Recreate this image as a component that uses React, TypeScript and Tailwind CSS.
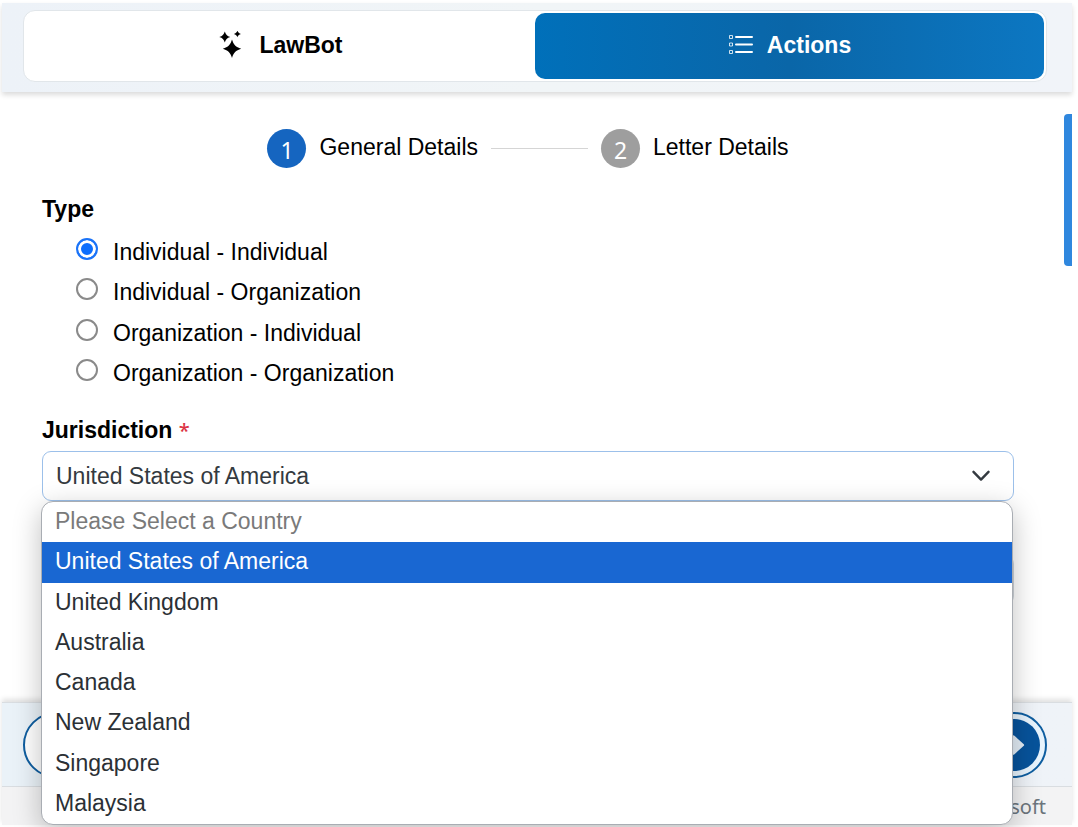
import React, { useState } from "react";

const COUNTRIES = [
  "United States of America",
  "United Kingdom",
  "Australia",
  "Canada",
  "New Zealand",
  "Singapore",
  "Malaysia",
];

const PARTY_TYPES = [
  "Individual - Individual",
  "Individual - Organization",
  "Organization - Individual",
  "Organization - Organization",
];

const SparkIcon = () => (
  <svg width="24" height="28" viewBox="0 0 24 28" fill="currentColor" aria-hidden="true">
    <path d="M14 8.500c1.700 5.400 3.600 7.400 9.200 9.200c-5.600 1.800-7.500 3.800-9.200 9.200c-1.700-5.400-3.600-7.400-9.200-9.200c5.600-1.800 7.500-3.800 9.200-9.200z" />
    <path d="M6.800.4c1 3.200 2.200 4.500 5.500 5.500c-3.300 1-4.500 2.300-5.500 5.500c-1-3.200-2.200-4.500-5.500-5.500c3.300-1 4.500-2.300 5.500-5.500z" />
    <path d="M19.400-.4c.6 1.900 1.500 2.700 3.600 3.300c-2.100.6-3 1.400-3.600 3.300c-.6-1.900-1.500-2.700-3.600-3.300c2.100-.6 3-1.400 3.600-3.300z" />
  </svg>
);

const ListIcon = () => (
  <svg width="25" height="20" viewBox="0 0 25 20" fill="none" stroke="currentColor" aria-hidden="true">
    <path d="M8 2H24M8 9.500H24M8 17H24" strokeWidth="2" strokeLinecap="round" />
    <path d="M1.500.5h3v3h-3zM1.500 8h3v3h-3zM1.500 15.500h3v3h-3z" strokeWidth="1" strokeOpacity="0.8" />
  </svg>
);

const ChevronIcon = () => (
  <svg
    className="pointer-events-none absolute right-6 top-1/2 -translate-y-1/2"
    width="18"
    height="12"
    viewBox="0 0 18 12"
    fill="none"
    stroke="#343a40"
    strokeWidth="2.400"
    strokeLinecap="round"
    strokeLinejoin="round"
    aria-hidden="true"
  >
    <path d="M1.500 1.800L9 9.600L16.500 1.800" />
  </svg>
);

const ArrowIcon = ({ flip }: { flip?: boolean }) => (
  <svg className={flip ? "rotate-180" : ""} width="22" height="22" viewBox="0 0 22 22" fill="currentColor" aria-hidden="true">
    <path d="M0 8H9V2.500Q9.500.5 11.500 1.800L20.800 10.200Q21.500 11 20.800 11.800L11.500 20.200Q9.500 21.500 9 19.500V14H0z" />
  </svg>
);

interface StepProps {
  number: number;
  label: string;
  active?: boolean;
}

const Step: React.FC<StepProps> = ({ number, label, active }) => (
  <li className="flex items-center gap-[13px]">
    <span
      className={`flex h-[39px] w-[39px] items-center justify-center rounded-full pt-0.5 font-['Noto_Sans'] text-white ${
        active ? "bg-[#1565c0]" : "bg-[#9e9e9e]"
      }`}
    >
      {number}
    </span>
    <span className="pb-1">{label}</span>
  </li>
);

const App: React.FC = () => {
  const [tab, setTab] = useState("actions");
  const [partyType, setPartyType] = useState(PARTY_TYPES[0]);
  const [country, setCountry] = useState(COUNTRIES[0]);
  const [open, setOpen] = useState(true);
  const [city, setCity] = useState("");

  const tabClass = (name: string) =>
    `flex items-center justify-center rounded-[10px] pb-0.5 font-bold ${
      tab === name ? "bg-linear-to-r from-[#0070ba] via-[#0a66a8] to-[#0c77c2] text-white" : "text-black"
    }`;

  return (
    <div className="flex min-h-screen flex-col overflow-hidden bg-white pt-[3px] pr-[6px] pb-[2px] pl-[2px] font-['Liberation_Sans',sans-serif] text-[23px] leading-7 text-black">
      {/* Tabs */}
      <header className="bg-linear-to-r from-[#edf2f8] via-[#f1f5f7] to-[#f1f4f9] pt-[7px] pr-[25px] pb-[10px] pl-[21px] shadow-[0_3px_5px_rgba(0,0,0,0.14)]">
        <div className="grid h-[72px] grid-cols-2 rounded-xl border border-[#e1e6ea] bg-white p-[2px]">
          <button type="button" onClick={() => setTab("lawbot")} className={`${tabClass("lawbot")} gap-[17px]`}>
            <SparkIcon />
            LawBot
          </button>
          <button type="button" onClick={() => setTab("actions")} className={`${tabClass("actions")} gap-[14px]`}>
            <ListIcon />
            Actions
          </button>
        </div>
      </header>

      <main className="relative flex-1 pt-[37px] pr-[58px] pl-10">
        {/* Scroll thumb */}
        <div className="absolute top-[22px] right-0 h-[152px] w-2 rounded-l bg-[#2f87de]" />

        <ol className="flex items-center justify-center gap-[13px]">
          <Step number={1} label="General Details" active />
          <li aria-hidden="true" className="h-px w-[97px] bg-[#d5d5d5]" />
          <Step number={2} label="Letter Details" />
        </ol>

        <fieldset className="mt-[27px]">
          <legend className="font-bold">Type</legend>
          <div className="mt-[15px] grid h-[161px] auto-rows-fr pl-[34px]">
            {PARTY_TYPES.map((type) => (
              <label key={type} className="flex items-start gap-[15px]">
                <input
                  type="radio"
                  name="partyType"
                  checked={partyType === type}
                  onChange={() => setPartyType(type)}
                  className="h-[22px] w-[22px] appearance-none rounded-full border-2 border-[#8a8a8a] bg-white checked:border-[#1a73f8] checked:bg-[#0d6efd] checked:shadow-[inset_0_0_0_3px_#fff]"
                />
                {type}
              </label>
            ))}
          </div>
        </fieldset>

        <div className="mt-[17px]">
          <label htmlFor="jurisdiction" className="font-bold">
            Jurisdiction <span className="font-['Noto_Sans'] text-[20px] font-medium text-[#dc3545]">*</span>
          </label>
        </div>
        <div className="relative mt-[6px]">
          <select
            id="jurisdiction"
            value={country}
            onMouseDown={(e) => {
              e.preventDefault();
              setOpen(!open);
            }}
            onChange={(e) => setCountry(e.target.value)}
            className="block h-[50px] w-full appearance-none rounded-[9px] border border-[#9cc0ea] bg-white px-[13px] text-[#343a40] outline-none"
          >
            {COUNTRIES.map((name) => (
              <option key={name}>{name}</option>
            ))}
          </select>
          <ChevronIcon />
          {open && (
            <ul
              role="listbox"
              aria-label="Country"
              className="absolute top-full right-px -left-px z-10 grid h-[324px] auto-rows-fr overflow-hidden rounded-xl border border-[#a9adb3] bg-white text-[#2b3035] shadow-[0_8px_28px_rgba(0,0,0,0.25)]"
            >
              <li role="option" aria-disabled="true" aria-selected="false" className="flex items-center px-[13px] pb-0.5 text-[#7a7a7a]">
                Please Select a Country
              </li>
              {COUNTRIES.map((name) => (
                <li
                  key={name}
                  role="option"
                  aria-selected={name === country}
                  onClick={() => {
                    setCountry(name);
                    setOpen(false);
                  }}
                  className={`flex items-center px-[13px] pb-0.5 ${name === country ? "bg-[#1967d2] text-white" : ""}`}
                >
                  {name}
                </li>
              ))}
            </ul>
          )}
        </div>
        <input
          type="text"
          aria-label="City"
          value={city}
          onChange={(e) => setCity(e.target.value)}
          className="mt-[54px] block h-[50px] w-full rounded-[9px] border border-[#ced4da] px-3 outline-none"
        />
      </main>

      <footer className="shadow-[0_-3px_5px_rgba(0,0,0,0.12)]">
        <div className="flex items-center justify-between border-y border-[#d9dde1] bg-linear-to-r from-[#eaf2f8] to-[#eff3f8] pt-[9px] pr-[25px] pb-2 pl-[21px]">
          <button
            type="button"
            aria-label="Back"
            className="flex h-[66px] w-[66px] items-center justify-center rounded-full border-2 border-[#0f5ea0] bg-white text-[#0f5ea0]"
          >
            <ArrowIcon flip />
          </button>
          <button
            type="button"
            aria-label="Next"
            className="flex h-[66px] w-[66px] items-center justify-center rounded-full border-2 border-[#0f5ea0] bg-[#e8f4fd] p-[5px] text-[#e3edf6]"
          >
            <span className="flex h-full w-full items-center justify-center rounded-full bg-[#07539b]">
              <ArrowIcon />
            </span>
          </button>
        </div>
        <p className="h-[38px] bg-[#f3f3f4] pt-[6px] pr-[26px] text-right font-['Noto_Sans'] text-[20px] text-[#6c757d]">
          Microsoft
        </p>
      </footer>
    </div>
  );
};

export default App;
